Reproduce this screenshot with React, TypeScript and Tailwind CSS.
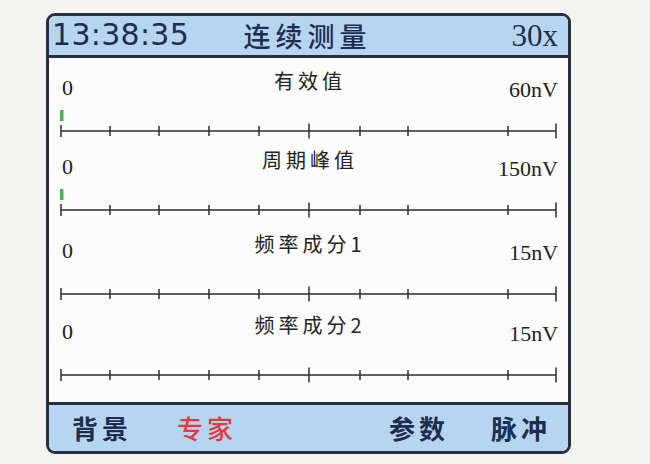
import React from "react";

const TICKS = [61, 110, 159, 209, 259, 309, 360, 408, 508, 556];
const MAJOR = new Set([309, 556]);

function Axis({ marker }: { marker: boolean }) {
  const off = 49;
  return (
    <svg width="519" height="44" viewBox="0 0 519 44" className="block">
      {marker && <rect x={61 - off - 1} y={7} width={3.5} height={11} fill="#49b14d" />}
      <line x1={61 - off} y1={28} x2={556 - off} y2={28} stroke="#2a2c34" strokeWidth={1.6} />
      {TICKS.map((t) => {
        const h = MAJOR.has(t) ? 7.5 : t === 61 ? 6 : 5;
        return (
          <line
            key={t}
            x1={t - off}
            x2={t - off}
            y1={28 - h}
            y2={28 + h}
            stroke="#2a2c34"
            strokeWidth={1.5}
          />
        );
      })}
    </svg>
  );
}

const rows = [
  { title: "有效值", value: "60nV", marker: true, mt: "mt-[13px]" },
  { title: "周期峰值", value: "150nV", marker: true, mt: "mt-[3px]" },
  { title: "频率成分1", value: "15nV", marker: false, mt: "mt-[8px]" },
  { title: "频率成分2", value: "15nV", marker: false, mt: "mt-[5px]" },
];

export default function App() {
  const serif = { fontFamily: '"Liberation Serif", "Noto Sans CJK SC", serif' };
  const cjk = { fontFamily: '"Noto Sans CJK SC", sans-serif' };
  return (
    <div className="w-[650px] h-[464px] bg-[#f3f3f2] overflow-hidden pt-[13px] pl-[46px]">
      <div className="w-[525px] h-[441px] border-[3px] border-[#2b2f3d] rounded-[9px] overflow-hidden flex flex-col bg-[#fcfcfc]">
        {/* header */}
        <div className="h-[42px] shrink-0 bg-[#b6d5f1] border-b-[3px] border-[#2b2f3d] flex items-center pl-[3px] pr-[10px] text-[#1f2d50]">
          <div className="flex-1">
            <span
              className="text-[30px] leading-none tracking-[0.3px]"
              style={{ fontFamily: '"DejaVu Sans", sans-serif' }}
            >
              13:38:35
            </span>
          </div>
          <div className="text-[27px] leading-none font-medium tracking-[5px] pl-[5px]" style={cjk}>
            连续测量
          </div>
          <div className="flex-1 flex justify-end">
            <span className="text-[31px] leading-none" style={serif}>
              30x
            </span>
          </div>
        </div>

        {/* body */}
        <div className="flex-1 flex flex-col">
          {rows.map((r) => (
            <div key={r.title} className={`${r.mt} flex flex-col`}>
              <div className="h-[32px] flex items-start pl-[13px] pr-[10px] text-[#222]">
                <div className="flex-1 mt-[6px] text-[22px] leading-[22px]" style={serif}>
                  0
                </div>
                <div className="text-[20px] leading-[20px] tracking-[4px]" style={cjk}>
                  {r.title}
                </div>
                <div className="flex-1 flex justify-end mt-[8px]">
                  <span className="text-[22px] leading-[22px]" style={serif}>
                    {r.value}
                  </span>
                </div>
              </div>
              <Axis marker={r.marker} />
            </div>
          ))}
        </div>

        {/* footer */}
        <div
          className="h-[49px] shrink-0 bg-[#b6d5f1] border-t-[3px] border-[#2b2f3d] flex items-center pl-[23px] pr-[17px] text-[26px] leading-none font-bold tracking-[4px]"
          style={cjk}
        >
          <span className="text-[#1f2d50]">背景</span>
          <span className="ml-[45px] text-[#e23b3f] font-medium">专家</span>
          <span className="ml-auto text-[#1f2d50] font-semibold">参数</span>
          <span className="ml-[42px] text-[#1f2d50] font-semibold">脉冲</span>
        </div>
      </div>
    </div>
  );
}
